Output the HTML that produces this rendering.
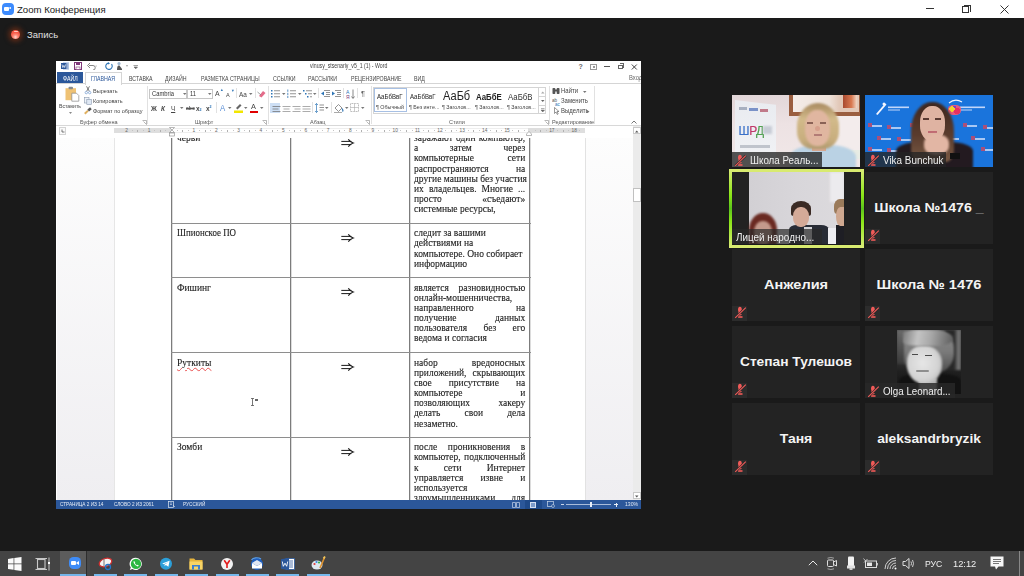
<!DOCTYPE html>
<html><head><meta charset="utf-8">
<style>
*{margin:0;padding:0;box-sizing:border-box}
html,body{width:1024px;height:576px;overflow:hidden;background:#1a1a1a;font-family:"Liberation Sans",sans-serif}
.a{position:absolute}
.t{position:absolute;white-space:nowrap;line-height:1}
/* title bar */
#tb{left:0;top:0;width:1024px;height:18px;background:#fff}
/* word */
#w{left:56px;top:61px;width:585px;height:448px;background:#fff;overflow:hidden}
.tab{position:absolute;top:14.5px;font-size:6.5px;color:#444;white-space:nowrap;line-height:1;transform:scaleX(0.81);transform-origin:0 0}
.rl{position:absolute;font-size:6px;color:#444;white-space:nowrap;line-height:1;transform:scaleX(0.92);transform-origin:0 0}
.doc{font-family:"Liberation Serif",serif;color:#1e1e1e;font-size:10px;line-height:1;-webkit-text-stroke:0.12px #1e1e1e}
.vl{position:absolute;width:1px;background:#6a6a6a}
.hl{position:absolute;height:1px;background:#6a6a6a}
/* tiles */
.tile{position:absolute;width:128px;height:72px;background:#232323;overflow:hidden}
.nm{position:absolute;left:0;right:0;top:29px;text-align:center;color:#f2f2f2;font-weight:bold;font-size:12.5px;line-height:1;white-space:nowrap}
.mic{position:absolute;left:0;top:57px;width:15px;height:15px;background:#2c2c2c}
.lbl{position:absolute;left:0;top:57px;height:15px;background:rgba(30,30,30,0.72);color:#eee;font-size:9.5px;line-height:15px;white-space:nowrap}
/* taskbar */
#task{left:0;top:551px;width:1024px;height:25px;background:#444}
.ul{position:absolute;top:23px;height:2px;width:23px;background:#76b9ed}
</style></head><body>

<!-- Title bar -->
<div id="tb" class="a">
  <div class="a" style="left:2px;top:3px;width:11.5px;height:12px;border-radius:4px;background:#3d8bfd"></div>
  <div class="a" style="left:4px;top:7px;width:4.5px;height:3.5px;background:#fff;border-radius:1px"></div>
  <div class="a" style="left:8px;top:7px;width:0;height:0;border-top:1.75px solid transparent;border-bottom:1.75px solid transparent;border-right:3px solid #fff"></div>
  <div class="t" style="left:17px;top:4.6px;font-size:9.6px;color:#222">Zoom Конференция</div>
  <div class="a" style="left:926px;top:8px;width:8px;height:1px;background:#333"></div>
  <div class="a" style="left:962px;top:6px;width:7px;height:7px;border:1px solid #333;background:#fff"></div>
  <div class="a" style="left:964px;top:4.5px;width:7px;height:7px;border-top:1px solid #333;border-right:1px solid #333"></div>
  <svg class="a" style="left:1000px;top:4.5px" width="9" height="9"><path d="M0.5 0.5L8.5 8.5M8.5 0.5L0.5 8.5" stroke="#333" stroke-width="1"/></svg>
</div>

<!-- Recording -->
<div class="a" style="left:11.4px;top:29.8px;width:8.8px;height:8.8px;border-radius:50%;background:radial-gradient(circle at 50% 78%,#ffd8d0 0,#ff8a78 28%,#f85a48 55%);box-shadow:0 0 5px 2.5px rgba(170,60,20,0.5)"></div>
<div class="a" style="left:14px;top:31.2px;width:3.8px;height:0.9px;background:#ffc8bc;border-radius:1px"></div>
<div class="t" style="left:27px;top:29.5px;font-size:9.5px;color:#e0e0e0">Запись</div>

<!-- WORD -->
<div id="w" class="a">

  <!-- title row -->
  <svg class="a" style="left:5px;top:1px" width="8" height="8"><rect x="2" y="0" width="6" height="8" fill="#c8d6ee"/><rect x="0" y="1" width="5.5" height="6" fill="#2b579a"/><path d="M1 2.5L1.8 5.5L2.75 3.5L3.7 5.5L4.5 2.5" stroke="#fff" stroke-width="0.7" fill="none"/><path d="M6 2H7.5M6 4H7.5M6 6H7.5" stroke="#2b579a" stroke-width="0.6"/></svg>
  <svg class="a" style="left:18px;top:1px" width="8" height="8"><rect x="0.5" y="0.5" width="7" height="7" fill="none" stroke="#80397b" stroke-width="1"/><rect x="2" y="0.5" width="4" height="2.5" fill="#80397b"/><rect x="2" y="5" width="4" height="2.5" fill="#fff" stroke="#80397b" stroke-width="0.6"/></svg>
  <svg class="a" style="left:31px;top:1px" width="10" height="8"><path d="M2 3.5H6A2.2 2.2 0 0 1 6 8" stroke="#777" stroke-width="0.9" fill="none"/><path d="M0.5 3.5L3 1M0.5 3.5L3 6" stroke="#777" stroke-width="0.9" fill="none"/><path d="M8.5 4H10" stroke="#999" stroke-width="0.6"/></svg>
  <svg class="a" style="left:49px;top:1px" width="8" height="8"><path d="M6.5 2.2A3.2 3.2 0 1 1 3.2 1.1" stroke="#2e75b6" stroke-width="1.1" fill="none"/><path d="M3 0L5 1.5L3 2.6Z" fill="#2e75b6"/></svg>
  <svg class="a" style="left:60px;top:0px" width="14" height="10"><circle cx="3" cy="2.5" r="1.6" fill="#9fb7d0"/><path d="M1 9C1 5 2 4 3.5 4.5L6 8V9Z" fill="#555"/><path d="M10 4.5L12 4.5L11 5.6Z" fill="#444"/></svg>
  <svg class="a" style="left:77px;top:3px" width="6" height="5"><path d="M0.5 1.5H5M1 3L2.75 4.8L4.5 3Z" stroke="#666" stroke-width="0.6" fill="#666"/></svg>
  <div class="t" style="left:253.5px;top:2.2px;font-size:6.5px;color:#444;transform:scaleX(0.80);transform-origin:0 0">vinusy_stsenariy_v5_1 (1) - Word</div>
  <div class="t" style="left:522.5px;top:2px;font-size:7px;color:#666;font-weight:bold">?</div>
  <div class="a" style="left:534px;top:2.5px;width:7px;height:6px;border:1px solid #999"></div>
  <div class="a" style="left:536.5px;top:4.5px;width:2px;height:2.5px;background:#999"></div>
  <div class="a" style="left:548px;top:5px;width:6px;height:1px;background:#555"></div>
  <div class="a" style="left:562px;top:3.5px;width:4.5px;height:4.5px;border:1px solid #666"></div>
  <div class="a" style="left:563.5px;top:2px;width:4.5px;height:4.5px;border-top:1px solid #666;border-right:1px solid #666"></div>
  <svg class="a" style="left:574.5px;top:2.5px" width="7" height="6"><path d="M0.8 0.5L5.8 5.5M5.8 0.5L0.8 5.5" stroke="#444" stroke-width="1"/></svg>

  <!-- tabs -->
  <div class="a" style="left:1px;top:11px;width:26px;height:11.5px;background:#2b579a"></div>
  <div class="tab" style="left:6.5px;color:#fff">ФАЙЛ</div>
  <div class="a" style="left:29px;top:11px;width:37px;height:13px;border:1px solid #d5d5d5;border-bottom:none;background:#fff"></div>
  <div class="a" style="left:0;top:22px;width:29px;height:1px;background:#d5d5d5"></div>
  <div class="a" style="left:66px;top:22px;width:519px;height:1px;background:#d5d5d5"></div>
  <div class="tab" style="left:35.2px;color:#2b579a">ГЛАВНАЯ</div>
  <div class="tab" style="left:72.6px">ВСТАВКА</div>
  <div class="tab" style="left:108.6px">ДИЗАЙН</div>
  <div class="tab" style="left:145px">РАЗМЕТКА СТРАНИЦЫ</div>
  <div class="tab" style="left:217px">ССЫЛКИ</div>
  <div class="tab" style="left:252px">РАССЫЛКИ</div>
  <div class="tab" style="left:295px">РЕЦЕНЗИРОВАНИЕ</div>
  <div class="tab" style="left:357.7px">ВИД</div>
  <div class="t" style="left:573px;top:13.5px;font-size:6.5px;color:#666;transform:scaleX(0.9);transform-origin:0 0">Вход</div>


  <!-- RIBBON: clipboard -->
  <svg class="a" style="left:8.5px;top:25px" width="15" height="16"><rect x="0.5" y="2.2" width="10.5" height="12" fill="#efc274"/><rect x="3.5" y="0.8" width="4.5" height="2.4" rx="1" fill="#8a8a8a"/><path d="M6.8 7.2H11.5L13.8 9.5V15.2H6.8Z" fill="#fff" stroke="#888" stroke-width="0.7"/></svg>
  <div class="rl" style="left:3px;top:41.8px;font-size:6.1px;color:#444;transform:scaleX(0.85)">Вставить</div>
  <svg class="a" style="left:13px;top:51px" width="3" height="2"><path d="M0 0H3L1.5 2Z" fill="#888"/></svg>
  <svg class="a" style="left:28px;top:25px" width="8" height="9"><path d="M2.5 0.3L5.3 5.2M5.5 0.3L2.7 5.2" stroke="#444" stroke-width="0.7"/><circle cx="2.3" cy="6.6" r="1.2" fill="none" stroke="#5a8ac6" stroke-width="0.6"/><circle cx="5.7" cy="6.6" r="1.2" fill="none" stroke="#5a8ac6" stroke-width="0.6"/></svg>
  <div class="rl" style="left:36.7px;top:26.5px;">Вырезать</div>
  <svg class="a" style="left:28px;top:36px" width="8" height="8"><rect x="0.5" y="0.5" width="4.5" height="5.5" fill="#eef2f8" stroke="#8a9ab0" stroke-width="0.6"/><rect x="2.8" y="2.3" width="4.5" height="5.2" fill="#dfe8f4" stroke="#8a9ab0" stroke-width="0.6"/></svg>
  <div class="rl" style="left:36.7px;top:36.9px;">Копировать</div>
  <svg class="a" style="left:28px;top:46px" width="8" height="8"><path d="M0.8 6.8L4 3.6" stroke="#e0b060" stroke-width="2"/><rect x="3.8" y="1.2" width="3.5" height="2.6" fill="#555" transform="rotate(-40 5.5 2.5)"/></svg>
  <div class="rl" style="left:36.7px;top:47.3px;">Формат по образцу</div>
  <div class="rl" style="left:24px;top:58.2px;color:#555">Буфер обмена</div>
  <svg class="a" style="left:85.5px;top:58.5px" width="5" height="5"><path d="M0.5 0.5H4.5V4.5M1.5 1.5L4.5 4.5" stroke="#888" stroke-width="0.6" fill="none"/></svg>
  <div class="a" style="left:90.5px;top:25px;width:1px;height:38px;background:#e1e1e1"></div>

  <!-- font group -->
  <div class="a" style="left:93.4px;top:27.6px;width:38px;height:10px;border:1px solid #c6c6c6"></div>
  <div class="rl" style="left:95.5px;top:29.6px;font-size:6.3px;color:#333">Cambria</div>
  <svg class="a" style="left:127px;top:31.5px" width="4" height="3"><path d="M0 0H3.5L1.75 2Z" fill="#777"/></svg>
  <div class="a" style="left:131.4px;top:27.6px;width:25.3px;height:10px;border:1px solid #c6c6c6"></div>
  <div class="rl" style="left:134px;top:29.6px;font-size:6.3px;color:#333">11</div>
  <svg class="a" style="left:152px;top:31.5px" width="4" height="3"><path d="M0 0H3.5L1.75 2Z" fill="#777"/></svg>
  <div class="rl" style="left:158.5px;top:29px;font-size:7.5px;color:#444">A</div><div class="rl" style="left:164px;top:27px;font-size:4px;color:#2e75b6">▲</div>
  <div class="rl" style="left:170px;top:30.5px;font-size:6px;color:#444">A</div><div class="rl" style="left:174.5px;top:27.5px;font-size:4px;color:#2e75b6">▼</div>
  <div class="a" style="left:180px;top:27px;width:1px;height:10px;background:#e1e1e1"></div>
  <div class="rl" style="left:183px;top:29.5px;font-size:7px;color:#444">Aa</div>
  <svg class="a" style="left:193px;top:31.5px" width="4" height="3"><path d="M0 0H3.5L1.75 2Z" fill="#777"/></svg>
  <div class="a" style="left:199px;top:27px;width:1px;height:10px;background:#e1e1e1"></div>
  <svg class="a" style="left:201px;top:28px" width="9" height="9"><path d="M2 7L6 2L8.5 4L4.5 8.5Z" fill="#e46c8a"/><path d="M0.5 3L4 6" stroke="#777" stroke-width="0.7"/></svg>
  <div class="rl" style="left:95px;top:43.5px;font-size:7px;font-weight:bold;color:#444">Ж</div>
  <div class="rl" style="left:105px;top:43.5px;font-size:7px;font-style:italic;font-weight:bold;color:#444">К</div>
  <div class="rl" style="left:115px;top:43.5px;font-size:7px;text-decoration:underline;color:#444">Ч</div>
  <svg class="a" style="left:124px;top:46px" width="4" height="3"><path d="M0 0H3.5L1.75 2Z" fill="#777"/></svg>
  <div class="rl" style="left:130px;top:44.5px;font-size:5.5px;font-weight:bold;color:#555;text-decoration:line-through">abc</div>
  <div class="rl" style="left:140px;top:44px;font-size:7px;font-weight:bold;color:#444">x<span style="font-size:4px;color:#2e75b6">2</span></div>
  <div class="rl" style="left:150px;top:44px;font-size:7px;font-weight:bold;color:#444">x<span style="font-size:4px;vertical-align:3px;color:#2e75b6">2</span></div>
  <div class="a" style="left:160px;top:41px;width:1px;height:11px;background:#e1e1e1"></div>
  <div class="rl" style="left:164px;top:43px;font-size:8.5px;color:#5b8fd6">A</div>
  <svg class="a" style="left:172px;top:46px" width="4" height="3"><path d="M0 0H3.5L1.75 2Z" fill="#777"/></svg>
  <svg class="a" style="left:178px;top:41px" width="10" height="11"><path d="M2 6L6 2L7.5 3.5L3.5 7.5Z" fill="#666"/><rect x="0" y="8.5" width="9" height="2.5" fill="#f2e600"/></svg>
  <svg class="a" style="left:188px;top:46px" width="4" height="3"><path d="M0 0H3.5L1.75 2Z" fill="#777"/></svg>
  <div class="rl" style="left:195px;top:42px;font-size:8px;color:#444">A</div>
  <div class="a" style="left:194px;top:50px;width:8px;height:2.3px;background:#e00000"></div>
  <svg class="a" style="left:204px;top:46px" width="4" height="3"><path d="M0 0H3.5L1.75 2Z" fill="#777"/></svg>
  <div class="rl" style="left:139px;top:58.2px;color:#555">Шрифт</div>
  <svg class="a" style="left:206px;top:58.5px" width="5" height="5"><path d="M0.5 0.5H4.5V4.5M1.5 1.5L4.5 4.5" stroke="#888" stroke-width="0.6" fill="none"/></svg>
  <div class="a" style="left:212px;top:25px;width:1px;height:38px;background:#e1e1e1"></div>

  <!-- paragraph group (rel x = abs-56) -->
  <svg class="a" style="left:215px;top:28px" width="9" height="9"><g fill="#2e75b6"><rect x="0" y="1" width="1.5" height="1.5"/><rect x="0" y="4" width="1.5" height="1.5"/><rect x="0" y="7" width="1.5" height="1.5"/></g><g stroke="#777" stroke-width="0.8"><path d="M3 1.75H9M3 4.75H9M3 7.75H9"/></g></svg>
  <svg class="a" style="left:226px;top:31.5px" width="4" height="3"><path d="M0 0H3.5L1.75 2Z" fill="#777"/></svg>
  <svg class="a" style="left:231px;top:28px" width="9" height="9"><g stroke="#2e75b6" stroke-width="0.8"><path d="M0.8 0.5V2.8M0.8 3.8V6M0.8 6.8V9"/></g><g stroke="#777" stroke-width="0.8"><path d="M3 1.75H9M3 4.75H9M3 7.75H9"/></g></svg>
  <svg class="a" style="left:242px;top:31.5px" width="4" height="3"><path d="M0 0H3.5L1.75 2Z" fill="#777"/></svg>
  <svg class="a" style="left:247px;top:28px" width="9" height="9"><g fill="#2e75b6"><rect x="0" y="1" width="1.5" height="1.5"/><rect x="2" y="4" width="1.5" height="1.5"/><rect x="4" y="7" width="1.5" height="1.5"/></g><g stroke="#777" stroke-width="0.8"><path d="M3 1.75H9M5 4.75H9M7 7.75H9"/></g></svg>
  <svg class="a" style="left:257px;top:31.5px" width="4" height="3"><path d="M0 0H3.5L1.75 2Z" fill="#777"/></svg>
  <div class="a" style="left:262px;top:27px;width:1px;height:10px;background:#e1e1e1"></div>
  <svg class="a" style="left:265px;top:28px" width="9" height="9"><path d="M3 1.5H9M5 3.5H9M5 5.5H9M3 7.5H9" stroke="#777" stroke-width="0.8"/><path d="M0 4.5L3 2.5V6.5Z" fill="#2e75b6"/></svg>
  <svg class="a" style="left:276px;top:28px" width="9" height="9"><path d="M3 1.5H9M5 3.5H9M5 5.5H9M3 7.5H9" stroke="#777" stroke-width="0.8"/><path d="M3 4.5L0 2.5V6.5Z" fill="#2e75b6"/></svg>
  <div class="a" style="left:287px;top:27px;width:1px;height:10px;background:#e1e1e1"></div>
  <svg class="a" style="left:290px;top:27.5px" width="9" height="10"><text x="0" y="4.5" font-size="5" fill="#2e75b6" font-family="Liberation Sans">A</text><text x="0" y="9.5" font-size="5" fill="#80397b" font-family="Liberation Sans">Я</text><path d="M7 0.5V9M5.5 7.5L7 9.5L8.5 7.5" stroke="#555" stroke-width="0.7" fill="none"/></svg>
  <div class="a" style="left:301px;top:27px;width:1px;height:10px;background:#e1e1e1"></div>
  <div class="rl" style="left:305px;top:28.5px;font-size:8px;color:#666">¶</div>
  <div class="a" style="left:214.3px;top:42px;width:10.2px;height:10px;background:#cddff5"></div>
  <svg class="a" style="left:215.5px;top:43.5px" width="9" height="8"><path d="M0.5 1.5H8.5M0.5 4H6.5M0.5 6.5H8.5" stroke="#6a6a6a" stroke-width="0.7"/></svg>
  <svg class="a" style="left:225.5px;top:43.5px" width="9" height="8"><path d="M0.5 1.5H8.5M1.5 4H7.5M0.5 6.5H8.5" stroke="#888" stroke-width="0.7"/></svg>
  <svg class="a" style="left:235.5px;top:43.5px" width="9" height="8"><path d="M0.5 1.5H8.5M2.5 4H8.5M0.5 6.5H8.5" stroke="#888" stroke-width="0.7"/></svg>
  <svg class="a" style="left:245.5px;top:43.5px" width="9" height="8"><path d="M0.5 1.5H8.5M0.5 4H8.5M0.5 6.5H8.5" stroke="#888" stroke-width="0.7"/></svg>
  <div class="a" style="left:256px;top:41px;width:1px;height:11px;background:#e1e1e1"></div>
  <svg class="a" style="left:259px;top:42px" width="9" height="10"><path d="M1.5 0.5V9.5M0 2L1.5 0.5L3 2M0 8L1.5 9.5L3 8" stroke="#2e75b6" stroke-width="0.7" fill="none"/><path d="M4.5 2H9M4.5 4.5H9M4.5 7H9" stroke="#777" stroke-width="0.8"/></svg>
  <svg class="a" style="left:269px;top:46px" width="4" height="3"><path d="M0 0H3.5L1.75 2Z" fill="#777"/></svg>
  <div class="a" style="left:275px;top:41px;width:1px;height:11px;background:#e1e1e1"></div>
  <svg class="a" style="left:278px;top:42px" width="10" height="10"><path d="M1 5L4.5 1.5L8 5L4.5 8.5Z" fill="#fff" stroke="#777" stroke-width="0.8"/><path d="M8 5.5Q9.5 7.5 8.5 8.5" stroke="#2e75b6" stroke-width="1.2" fill="none"/><rect x="0" y="9" width="8" height="1" fill="#aaa"/></svg>
  <svg class="a" style="left:289px;top:46px" width="4" height="3"><path d="M0 0H3.5L1.75 2Z" fill="#777"/></svg>
  <svg class="a" style="left:294px;top:42px" width="9" height="9"><rect x="0.5" y="0.5" width="8" height="8" fill="none" stroke="#999" stroke-width="0.7" stroke-dasharray="1 0.6"/><path d="M4.5 0.5V8.5M0.5 4.5H8.5" stroke="#aaa" stroke-width="0.6"/></svg>
  <svg class="a" style="left:305px;top:46px" width="4" height="3"><path d="M0 0H3.5L1.75 2Z" fill="#777"/></svg>
  <div class="rl" style="left:254px;top:58.2px;color:#555">Абзац</div>
  <svg class="a" style="left:309px;top:58.5px" width="5" height="5"><path d="M0.5 0.5H4.5V4.5M1.5 1.5L4.5 4.5" stroke="#888" stroke-width="0.6" fill="none"/></svg>
  <div class="a" style="left:315px;top:25px;width:1px;height:38px;background:#e1e1e1"></div>

  <!-- styles gallery -->
  <div class="a" style="left:317.4px;top:25.6px;width:172.5px;height:27px;border:1px solid #d4d4d4;background:#fff"></div>
  <div class="a" style="left:317.5px;top:27px;width:33px;height:24px;border:1px solid #a7c0e4"></div>
  <div class="rl" style="left:320.5px;top:33px;font-size:6.6px;color:#222">АаБбВвГ</div>
  <div class="rl" style="left:320px;top:44px;font-size:5.8px;color:#444">¶ Обычный</div>
  <div class="rl" style="left:354px;top:33px;font-size:6.6px;color:#222">АаБбВвГ</div>
  <div class="rl" style="left:353px;top:44px;font-size:5.8px;color:#444">¶ Без инте...</div>
  <div class="rl" style="left:387px;top:28.5px;font-size:12px;color:#222">АаБб</div>
  <div class="rl" style="left:386px;top:44px;font-size:5.8px;color:#444">¶ Заголов...</div>
  <div class="rl" style="left:419.7px;top:31.5px;font-size:8.5px;color:#222;font-weight:bold">АаБбЕ</div>
  <div class="rl" style="left:418.5px;top:44px;font-size:5.8px;color:#444">¶ Заголов...</div>
  <div class="rl" style="left:452px;top:31.5px;font-size:8.5px;color:#333">АаБбВ</div>
  <div class="rl" style="left:451px;top:44px;font-size:5.8px;color:#444">¶ Заголов...</div>
  <div class="a" style="left:482.4px;top:25.6px;width:7.5px;height:27px;border-left:1px solid #d4d4d4"></div>
  <div class="a" style="left:482.4px;top:35px;width:7.5px;height:1px;background:#d4d4d4"></div>
  <div class="a" style="left:482.4px;top:44px;width:7.5px;height:1px;background:#d4d4d4"></div>
  <svg class="a" style="left:484.5px;top:29.5px" width="4" height="3"><path d="M0 2.5H3.5L1.75 0.5Z" fill="#aaa"/></svg>
  <svg class="a" style="left:484.5px;top:38.5px" width="4" height="3"><path d="M0 0H3.5L1.75 2Z" fill="#666"/></svg>
  <svg class="a" style="left:484.5px;top:46.5px" width="4" height="5"><path d="M0 0.5H3.5M0 2H3.5L1.75 4Z" stroke="#666" stroke-width="0.5" fill="#666"/></svg>
  <div class="rl" style="left:393px;top:58.2px;color:#555">Стили</div>
  <svg class="a" style="left:487.5px;top:58.5px" width="5" height="5"><path d="M0.5 0.5H4.5V4.5M1.5 1.5L4.5 4.5" stroke="#888" stroke-width="0.6" fill="none"/></svg>
  <div class="a" style="left:493.4px;top:25px;width:1px;height:38px;background:#e1e1e1"></div>

  <!-- editing -->
  <svg class="a" style="left:496px;top:26px" width="8" height="8"><rect x="0.5" y="1" width="2.8" height="6" rx="0.8" fill="#555"/><rect x="4.7" y="1" width="2.8" height="6" rx="0.8" fill="#555"/><rect x="2.5" y="2.5" width="3" height="2" fill="#555"/></svg>
  <div class="rl" style="left:505px;top:26.8px;font-size:6.5px;color:#444">Найти</div>
  <svg class="a" style="left:526.5px;top:29.5px" width="4" height="3"><path d="M0 0H3.5L1.75 2Z" fill="#777"/></svg>
  <svg class="a" style="left:496px;top:36.5px" width="9" height="8"><text x="0" y="4" font-size="4.5" fill="#555" font-family="Liberation Sans">ab</text><text x="3" y="8" font-size="4.5" fill="#2e75b6" font-family="Liberation Sans">ac</text></svg>
  <div class="rl" style="left:505px;top:37px;font-size:6.5px;color:#444">Заменить</div>
  <svg class="a" style="left:498px;top:46px" width="6" height="8"><path d="M0.5 0.5V6.5L2 5L3.3 7.5L4.2 7L3 4.5H5Z" fill="#fff" stroke="#555" stroke-width="0.6"/></svg>
  <div class="rl" style="left:505px;top:47.2px;font-size:6.5px;color:#444">Выделить</div>
  <svg class="a" style="left:530px;top:49.5px" width="4" height="3"><path d="M0 0H3.5L1.75 2Z" fill="#777"/></svg>
  <div class="rl" style="left:496px;top:58.2px;color:#555">Редактирование</div>
  <div class="a" style="left:538px;top:25px;width:1px;height:38px;background:#e1e1e1"></div>
  <svg class="a" style="left:574.5px;top:59px" width="6" height="4"><path d="M0.5 3.5L3 1L5.5 3.5" stroke="#555" stroke-width="0.8" fill="none"/></svg>
<!--DOC-->
<div class="a" style="left:1px;top:75px;width:57px;height:364px;background:linear-gradient(#fdfdfd,#efeef1)"></div>
<div class="a" style="left:529.5px;top:75px;width:47.5px;height:364px;background:linear-gradient(#fdfdfd,#efeef1)"></div>
<div class="a" style="left:58px;top:75px;width:471.5px;height:364px;background:#fff;border-left:1px solid #e6e6e6;border-right:1px solid #e2e2e2"></div>
<div class="a" style="left:115px;top:76.3px;height:362.7px;width:2px;background:linear-gradient(90deg,#7c7c7c 50%,#dcdcdc 50%)"></div>
<div class="a" style="left:234px;top:76.3px;height:362.7px;width:2px;background:linear-gradient(90deg,#7c7c7c 50%,#dcdcdc 50%)"></div>
<div class="a" style="left:353px;top:76.3px;height:362.7px;width:2px;background:linear-gradient(90deg,#7c7c7c 50%,#dcdcdc 50%)"></div>
<div class="a" style="left:473px;top:76.3px;height:362.7px;width:2px;background:linear-gradient(90deg,#7c7c7c 50%,#dcdcdc 50%)"></div>
<div class="a" style="left:115px;top:162px;width:360px;height:1px;background:#8e8e8e"></div>
<div class="a" style="left:115px;top:216px;width:360px;height:1px;background:#8e8e8e"></div>
<div class="a" style="left:115px;top:291px;width:360px;height:1px;background:#8e8e8e"></div>
<div class="a" style="left:115px;top:376px;width:360px;height:1px;background:#8e8e8e"></div>
<div class="doc t" style="left:120.5px;top:72.1px;font-size:10px;transform:scaleX(0.95);transform-origin:0 0">черви</div>
<svg class="a" style="left:285px;top:77.6px" width="14" height="8"><path d="M0.3 2.4H10.3M0.3 5.6H10.3" stroke="#1a1a1a" stroke-width="1"/><path d="M7.3 0.3Q9.3 3 12.2 4Q9.3 5 7.3 7.7" stroke="#1a1a1a" stroke-width="1.1" fill="none"/></svg>
<div class="doc a" style="left:358.3px;top:72.1px;font-size:10px;width:117.1px;text-align:justify;text-align-last:justify;white-space:nowrap;transform:scaleX(0.95);transform-origin:0 0">заражают один компьютер,</div>
<div class="doc a" style="left:358.3px;top:82.2px;font-size:10px;width:117.1px;text-align:justify;text-align-last:justify;white-space:nowrap;transform:scaleX(0.95);transform-origin:0 0">а затем через</div>
<div class="doc a" style="left:358.3px;top:92.4px;font-size:10px;width:117.1px;text-align:justify;text-align-last:justify;white-space:nowrap;transform:scaleX(0.95);transform-origin:0 0">компьютерные сети</div>
<div class="doc a" style="left:358.3px;top:102.5px;font-size:10px;width:117.1px;text-align:justify;text-align-last:justify;white-space:nowrap;transform:scaleX(0.95);transform-origin:0 0">распространяются на</div>
<div class="doc a" style="left:358.3px;top:112.7px;font-size:10px;width:117.1px;text-align:justify;text-align-last:justify;white-space:nowrap;transform:scaleX(0.95);transform-origin:0 0">другие машины без участия</div>
<div class="doc a" style="left:358.3px;top:122.8px;font-size:10px;width:117.1px;text-align:justify;text-align-last:justify;white-space:nowrap;transform:scaleX(0.95);transform-origin:0 0">их владельцев. Многие ...</div>
<div class="doc a" style="left:358.3px;top:133.0px;font-size:10px;width:117.1px;text-align:justify;text-align-last:justify;white-space:nowrap;transform:scaleX(0.95);transform-origin:0 0">просто «съедают»</div>
<div class="doc t" style="left:358.3px;top:143.2px;font-size:10px;transform:scaleX(0.95);transform-origin:0 0">системные ресурсы,</div>
<div class="doc t" style="left:120.5px;top:167.3px;font-size:10px;transform:scaleX(0.95);transform-origin:0 0"><span style="display:inline-block;transform:scaleX(0.935);transform-origin:0 0">Шпионское ПО</span></div>
<svg class="a" style="left:285px;top:172.8px" width="14" height="8"><path d="M0.3 2.4H10.3M0.3 5.6H10.3" stroke="#1a1a1a" stroke-width="1"/><path d="M7.3 0.3Q9.3 3 12.2 4Q9.3 5 7.3 7.7" stroke="#1a1a1a" stroke-width="1.1" fill="none"/></svg>
<div class="doc t" style="left:358.3px;top:167.3px;font-size:10px;transform:scaleX(0.95);transform-origin:0 0">следит за вашими</div>
<div class="doc t" style="left:358.3px;top:177.4px;font-size:10px;transform:scaleX(0.95);transform-origin:0 0">действиями на</div>
<div class="doc t" style="left:358.3px;top:187.6px;font-size:10px;transform:scaleX(0.95);transform-origin:0 0">компьютере. Оно собирает</div>
<div class="doc t" style="left:358.3px;top:197.7px;font-size:10px;transform:scaleX(0.95);transform-origin:0 0">информацию</div>
<div class="doc t" style="left:120.5px;top:221.5px;font-size:10px;transform:scaleX(0.95);transform-origin:0 0">Фишинг</div>
<svg class="a" style="left:285px;top:227.0px" width="14" height="8"><path d="M0.3 2.4H10.3M0.3 5.6H10.3" stroke="#1a1a1a" stroke-width="1"/><path d="M7.3 0.3Q9.3 3 12.2 4Q9.3 5 7.3 7.7" stroke="#1a1a1a" stroke-width="1.1" fill="none"/></svg>
<div class="doc a" style="left:358.3px;top:221.5px;font-size:10px;width:117.1px;text-align:justify;text-align-last:justify;white-space:nowrap;transform:scaleX(0.95);transform-origin:0 0">является разновидностью</div>
<div class="doc t" style="left:358.3px;top:231.6px;font-size:10px;transform:scaleX(0.95);transform-origin:0 0">онлайн-мошенничества,</div>
<div class="doc a" style="left:358.3px;top:241.8px;font-size:10px;width:117.1px;text-align:justify;text-align-last:justify;white-space:nowrap;transform:scaleX(0.95);transform-origin:0 0">направленного на</div>
<div class="doc a" style="left:358.3px;top:251.9px;font-size:10px;width:117.1px;text-align:justify;text-align-last:justify;white-space:nowrap;transform:scaleX(0.95);transform-origin:0 0">получение данных</div>
<div class="doc a" style="left:358.3px;top:262.1px;font-size:10px;width:117.1px;text-align:justify;text-align-last:justify;white-space:nowrap;transform:scaleX(0.95);transform-origin:0 0">пользователя без его</div>
<div class="doc t" style="left:358.3px;top:272.2px;font-size:10px;transform:scaleX(0.95);transform-origin:0 0">ведома и согласия</div>
<div class="doc t" style="left:120.5px;top:296.6px;font-size:10px;transform:scaleX(0.95);transform-origin:0 0"><span style="text-decoration:underline wavy #e85050;text-decoration-thickness:0.5px;text-underline-offset:1px">Руткиты</span></div>
<svg class="a" style="left:285px;top:302.1px" width="14" height="8"><path d="M0.3 2.4H10.3M0.3 5.6H10.3" stroke="#1a1a1a" stroke-width="1"/><path d="M7.3 0.3Q9.3 3 12.2 4Q9.3 5 7.3 7.7" stroke="#1a1a1a" stroke-width="1.1" fill="none"/></svg>
<div class="doc a" style="left:358.3px;top:296.6px;font-size:10px;width:117.1px;text-align:justify;text-align-last:justify;white-space:nowrap;transform:scaleX(0.95);transform-origin:0 0">набор вредоносных</div>
<div class="doc a" style="left:358.3px;top:306.8px;font-size:10px;width:117.1px;text-align:justify;text-align-last:justify;white-space:nowrap;transform:scaleX(0.95);transform-origin:0 0">приложений, скрывающих</div>
<div class="doc a" style="left:358.3px;top:316.9px;font-size:10px;width:117.1px;text-align:justify;text-align-last:justify;white-space:nowrap;transform:scaleX(0.95);transform-origin:0 0">свое присутствие на</div>
<div class="doc a" style="left:358.3px;top:327.1px;font-size:10px;width:117.1px;text-align:justify;text-align-last:justify;white-space:nowrap;transform:scaleX(0.95);transform-origin:0 0">компьютере и</div>
<div class="doc a" style="left:358.3px;top:337.2px;font-size:10px;width:117.1px;text-align:justify;text-align-last:justify;white-space:nowrap;transform:scaleX(0.95);transform-origin:0 0">позволяющих хакеру</div>
<div class="doc a" style="left:358.3px;top:347.4px;font-size:10px;width:117.1px;text-align:justify;text-align-last:justify;white-space:nowrap;transform:scaleX(0.95);transform-origin:0 0">делать свои дела</div>
<div class="doc t" style="left:358.3px;top:357.5px;font-size:10px;transform:scaleX(0.95);transform-origin:0 0">незаметно.</div>
<div class="doc t" style="left:120.5px;top:381.2px;font-size:10px;transform:scaleX(0.95);transform-origin:0 0">Зомби</div>
<svg class="a" style="left:285px;top:386.7px" width="14" height="8"><path d="M0.3 2.4H10.3M0.3 5.6H10.3" stroke="#1a1a1a" stroke-width="1"/><path d="M7.3 0.3Q9.3 3 12.2 4Q9.3 5 7.3 7.7" stroke="#1a1a1a" stroke-width="1.1" fill="none"/></svg>
<div class="doc a" style="left:358.3px;top:381.2px;font-size:10px;width:117.1px;text-align:justify;text-align-last:justify;white-space:nowrap;transform:scaleX(0.95);transform-origin:0 0">после проникновения в</div>
<div class="doc a" style="left:358.3px;top:391.4px;font-size:10px;width:117.1px;text-align:justify;text-align-last:justify;white-space:nowrap;transform:scaleX(0.95);transform-origin:0 0">компьютер, подключенный</div>
<div class="doc a" style="left:358.3px;top:401.5px;font-size:10px;width:117.1px;text-align:justify;text-align-last:justify;white-space:nowrap;transform:scaleX(0.95);transform-origin:0 0">к сети Интернет</div>
<div class="doc a" style="left:358.3px;top:411.7px;font-size:10px;width:117.1px;text-align:justify;text-align-last:justify;white-space:nowrap;transform:scaleX(0.95);transform-origin:0 0">управляется извне и</div>
<div class="doc t" style="left:358.3px;top:421.8px;font-size:10px;transform:scaleX(0.95);transform-origin:0 0">используется</div>
<div class="doc a" style="left:358.3px;top:432.0px;font-size:10px;width:117.1px;text-align:justify;text-align-last:justify;white-space:nowrap;transform:scaleX(0.95);transform-origin:0 0">злоумышленниками для</div>
<svg class="a" style="left:194px;top:337px" width="9" height="8"><path d="M1 0.5H4M1 7.5H4M2.5 0.5V7.5" stroke="#555" stroke-width="0.8"/><rect x="5" y="1" width="3" height="2" fill="#666"/></svg>
<!--/DOC-->
<!--RULER-->
<div class="a" style="left:0;top:64px;width:577px;height:12.6px;background:#fff"></div>
<div class="a" style="left:3px;top:66px;width:7px;height:8px;border:1px solid #d4d4d4;background:#fafafa"></div>
<svg class="a" style="left:4.5px;top:68px" width="4" height="4"><path d="M1 0.5V3H3.5" stroke="#555" stroke-width="0.8" fill="none"/></svg>
<div class="a" style="left:58px;top:67px;width:57.5px;height:5px;background:#dedede"></div>
<div class="a" style="left:115.5px;top:67px;width:357px;height:5px;background:#fff;border-top:1px solid #eee;border-bottom:1px solid #eee"></div>
<div class="a" style="left:472.4px;top:67px;width:57px;height:5px;background:#dedede"></div>
<div class="t" style="left:69.3px;top:67.6px;font-size:4.8px;color:#666">2</div>
<div class="a" style="left:75.8px;top:69px;width:1px;height:1px;background:#c4c4c4"></div>
<div class="a" style="left:81.4px;top:68.5px;width:1px;height:2px;background:#b0b0b0"></div>
<div class="a" style="left:87.0px;top:69px;width:1px;height:1px;background:#c4c4c4"></div>
<div class="t" style="left:91.7px;top:67.6px;font-size:4.8px;color:#666">1</div>
<div class="a" style="left:98.2px;top:69px;width:1px;height:1px;background:#c4c4c4"></div>
<div class="a" style="left:103.8px;top:68.5px;width:1px;height:2px;background:#b0b0b0"></div>
<div class="a" style="left:109.4px;top:69px;width:1px;height:1px;background:#c4c4c4"></div>
<div class="a" style="left:120.6px;top:69px;width:1px;height:1px;background:#c4c4c4"></div>
<div class="a" style="left:126.2px;top:68.5px;width:1px;height:2px;background:#b0b0b0"></div>
<div class="a" style="left:131.8px;top:69px;width:1px;height:1px;background:#c4c4c4"></div>
<div class="t" style="left:136.5px;top:67.6px;font-size:4.8px;color:#666">1</div>
<div class="a" style="left:143.0px;top:69px;width:1px;height:1px;background:#c4c4c4"></div>
<div class="a" style="left:148.6px;top:68.5px;width:1px;height:2px;background:#b0b0b0"></div>
<div class="a" style="left:154.2px;top:69px;width:1px;height:1px;background:#c4c4c4"></div>
<div class="t" style="left:158.9px;top:67.6px;font-size:4.8px;color:#666">2</div>
<div class="a" style="left:165.4px;top:69px;width:1px;height:1px;background:#c4c4c4"></div>
<div class="a" style="left:170.9px;top:68.5px;width:1px;height:2px;background:#b0b0b0"></div>
<div class="a" style="left:176.5px;top:69px;width:1px;height:1px;background:#c4c4c4"></div>
<div class="t" style="left:181.2px;top:67.6px;font-size:4.8px;color:#666">3</div>
<div class="a" style="left:187.7px;top:69px;width:1px;height:1px;background:#c4c4c4"></div>
<div class="a" style="left:193.3px;top:68.5px;width:1px;height:2px;background:#b0b0b0"></div>
<div class="a" style="left:198.9px;top:69px;width:1px;height:1px;background:#c4c4c4"></div>
<div class="t" style="left:203.6px;top:67.6px;font-size:4.8px;color:#666">4</div>
<div class="a" style="left:210.1px;top:69px;width:1px;height:1px;background:#c4c4c4"></div>
<div class="a" style="left:215.7px;top:68.5px;width:1px;height:2px;background:#b0b0b0"></div>
<div class="a" style="left:221.3px;top:69px;width:1px;height:1px;background:#c4c4c4"></div>
<div class="t" style="left:226.0px;top:67.6px;font-size:4.8px;color:#666">5</div>
<div class="a" style="left:232.5px;top:69px;width:1px;height:1px;background:#c4c4c4"></div>
<div class="a" style="left:238.1px;top:68.5px;width:1px;height:2px;background:#b0b0b0"></div>
<div class="a" style="left:243.7px;top:69px;width:1px;height:1px;background:#c4c4c4"></div>
<div class="t" style="left:248.4px;top:67.6px;font-size:4.8px;color:#666">6</div>
<div class="a" style="left:254.9px;top:69px;width:1px;height:1px;background:#c4c4c4"></div>
<div class="a" style="left:260.5px;top:68.5px;width:1px;height:2px;background:#b0b0b0"></div>
<div class="a" style="left:266.1px;top:69px;width:1px;height:1px;background:#c4c4c4"></div>
<div class="t" style="left:270.8px;top:67.6px;font-size:4.8px;color:#666">7</div>
<div class="a" style="left:277.3px;top:69px;width:1px;height:1px;background:#c4c4c4"></div>
<div class="a" style="left:282.8px;top:68.5px;width:1px;height:2px;background:#b0b0b0"></div>
<div class="a" style="left:288.4px;top:69px;width:1px;height:1px;background:#c4c4c4"></div>
<div class="t" style="left:293.1px;top:67.6px;font-size:4.8px;color:#666">8</div>
<div class="a" style="left:299.6px;top:69px;width:1px;height:1px;background:#c4c4c4"></div>
<div class="a" style="left:305.2px;top:68.5px;width:1px;height:2px;background:#b0b0b0"></div>
<div class="a" style="left:310.8px;top:69px;width:1px;height:1px;background:#c4c4c4"></div>
<div class="t" style="left:315.5px;top:67.6px;font-size:4.8px;color:#666">9</div>
<div class="a" style="left:322.0px;top:69px;width:1px;height:1px;background:#c4c4c4"></div>
<div class="a" style="left:327.6px;top:68.5px;width:1px;height:2px;background:#b0b0b0"></div>
<div class="a" style="left:333.2px;top:69px;width:1px;height:1px;background:#c4c4c4"></div>
<div class="t" style="left:336.5px;top:67.6px;font-size:4.8px;color:#666">10</div>
<div class="a" style="left:344.4px;top:69px;width:1px;height:1px;background:#c4c4c4"></div>
<div class="a" style="left:350.0px;top:68.5px;width:1px;height:2px;background:#b0b0b0"></div>
<div class="a" style="left:355.6px;top:69px;width:1px;height:1px;background:#c4c4c4"></div>
<div class="t" style="left:358.9px;top:67.6px;font-size:4.8px;color:#666">11</div>
<div class="a" style="left:366.8px;top:69px;width:1px;height:1px;background:#c4c4c4"></div>
<div class="a" style="left:372.4px;top:68.5px;width:1px;height:2px;background:#b0b0b0"></div>
<div class="a" style="left:378.0px;top:69px;width:1px;height:1px;background:#c4c4c4"></div>
<div class="t" style="left:381.3px;top:67.6px;font-size:4.8px;color:#666">12</div>
<div class="a" style="left:389.2px;top:69px;width:1px;height:1px;background:#c4c4c4"></div>
<div class="a" style="left:394.8px;top:68.5px;width:1px;height:2px;background:#b0b0b0"></div>
<div class="a" style="left:400.3px;top:69px;width:1px;height:1px;background:#c4c4c4"></div>
<div class="t" style="left:403.6px;top:67.6px;font-size:4.8px;color:#666">13</div>
<div class="a" style="left:411.5px;top:69px;width:1px;height:1px;background:#c4c4c4"></div>
<div class="a" style="left:417.1px;top:68.5px;width:1px;height:2px;background:#b0b0b0"></div>
<div class="a" style="left:422.7px;top:69px;width:1px;height:1px;background:#c4c4c4"></div>
<div class="t" style="left:426.0px;top:67.6px;font-size:4.8px;color:#666">14</div>
<div class="a" style="left:433.9px;top:69px;width:1px;height:1px;background:#c4c4c4"></div>
<div class="a" style="left:439.5px;top:68.5px;width:1px;height:2px;background:#b0b0b0"></div>
<div class="a" style="left:445.1px;top:69px;width:1px;height:1px;background:#c4c4c4"></div>
<div class="t" style="left:448.4px;top:67.6px;font-size:4.8px;color:#666">15</div>
<div class="a" style="left:456.3px;top:69px;width:1px;height:1px;background:#c4c4c4"></div>
<div class="a" style="left:461.9px;top:68.5px;width:1px;height:2px;background:#b0b0b0"></div>
<div class="a" style="left:467.5px;top:69px;width:1px;height:1px;background:#c4c4c4"></div>
<div class="a" style="left:478.7px;top:69px;width:1px;height:1px;background:#c4c4c4"></div>
<div class="a" style="left:484.3px;top:68.5px;width:1px;height:2px;background:#b0b0b0"></div>
<div class="a" style="left:489.9px;top:69px;width:1px;height:1px;background:#c4c4c4"></div>
<div class="t" style="left:493.2px;top:67.6px;font-size:4.8px;color:#666">17</div>
<div class="a" style="left:501.1px;top:69px;width:1px;height:1px;background:#c4c4c4"></div>
<div class="a" style="left:506.6px;top:68.5px;width:1px;height:2px;background:#b0b0b0"></div>
<div class="a" style="left:512.2px;top:69px;width:1px;height:1px;background:#c4c4c4"></div>
<div class="t" style="left:515.5px;top:67.6px;font-size:4.8px;color:#666">18</div>
<div class="a" style="left:523.4px;top:69px;width:1px;height:1px;background:#c4c4c4"></div>
<svg class="a" style="left:112.5px;top:65.5px" width="6" height="10"><path d="M0.5 0.5H5.5L3 3L5.5 5.5H0.5L3 3Z" fill="#fff" stroke="#888" stroke-width="0.6"/><rect x="0.5" y="6" width="5" height="3" fill="#fff" stroke="#888" stroke-width="0.6"/></svg>
<svg class="a" style="left:469.5px;top:69.5px" width="6" height="5"><path d="M0.5 4.5H5.5V3L3 0.5L0.5 3Z" fill="#fff" stroke="#888" stroke-width="0.6"/></svg>
<div class="a" style="left:577px;top:64px;width:8px;height:375px;background:#ebebeb"></div>
<div class="a" style="left:577px;top:66px;width:7.5px;height:7px;background:#fff;border:1px solid #c8c8c8"></div>
<svg class="a" style="left:579px;top:68.5px" width="4" height="3"><path d="M0 2.5H3.5L1.75 0.5Z" fill="#555"/></svg>
<div class="a" style="left:577px;top:126.5px;width:7.5px;height:14px;background:#fff;border:1px solid #c0c0c0"></div>
<div class="a" style="left:577px;top:431px;width:7.5px;height:7px;background:#fff;border:1px solid #c8c8c8"></div>
<svg class="a" style="left:579px;top:433.5px" width="4" height="3"><path d="M0 0.5H3.5L1.75 2.5Z" fill="#555"/></svg>
<!--/RULER-->
  <div class="a" style="left:0;top:439px;width:585px;height:9px;background:#2b579a"></div>
  <div class="rl" style="left:4px;top:440.5px;font-size:5.6px;color:#e8eef7;transform:scaleX(0.84)">СТРАНИЦА 2 ИЗ 14</div>
  <div class="rl" style="left:58px;top:440.5px;font-size:5.6px;color:#e8eef7;transform:scaleX(0.84)">СЛОВО 2 ИЗ 2061</div>
  <svg class="a" style="left:111.5px;top:440px" width="8" height="7"><rect x="0.5" y="0.5" width="5" height="6" fill="none" stroke="#dfe7f3" stroke-width="0.7"/><path d="M2 2H4M2 3.5H4M5 4L7 6" stroke="#dfe7f3" stroke-width="0.6"/></svg>
  <div class="rl" style="left:127px;top:440.5px;font-size:5.6px;color:#e8eef7;transform:scaleX(0.84)">РУССКИЙ</div>
  <svg class="a" style="left:456px;top:440.5px" width="8" height="6"><path d="M0.5 0.5H3.5V5.5H0.5ZM4.5 0.5H7.5V5.5H4.5Z" fill="none" stroke="#c9d6ea" stroke-width="0.7"/></svg>
  <div class="a" style="left:469px;top:439px;width:17px;height:9px;background:#1f4a8a"></div>
  <div class="a" style="left:474px;top:440.5px;width:6px;height:6px;border:1px solid #d5dff0;background:#7d9ccb"></div>
  <svg class="a" style="left:491px;top:440px" width="8" height="7"><rect x="0.5" y="0.5" width="6" height="5" fill="none" stroke="#c9d6ea" stroke-width="0.7"/><circle cx="6" cy="5" r="1.5" fill="#2b579a" stroke="#c9d6ea" stroke-width="0.6"/></svg>
  <div class="a" style="left:505px;top:443px;width:3px;height:1px;background:#c9d6ea"></div>
  <div class="a" style="left:510px;top:443px;width:45px;height:1px;background:#a9bcda"></div>
  <div class="a" style="left:533.5px;top:440.5px;width:2px;height:5px;background:#e8eef7"></div>
  <div class="a" style="left:558px;top:443px;width:4px;height:1px;background:#e8eef7"></div>
  <div class="a" style="left:559.5px;top:441.5px;width:1px;height:4px;background:#e8eef7"></div>
  <div class="rl" style="left:568.5px;top:440.5px;font-size:5.6px;color:#dfe7f3">130%</div>

  <!-- ribbon bottom line -->
  <div class="a" style="left:0;top:63.5px;width:585px;height:1px;background:#d8d8d8"></div>
</div>

<!-- TILES -->
<!--TILES-->
<div class="tile" style="left:732px;top:95px"><div class="a" style="left:0px;top:0px;width:128px;height:72px;background:linear-gradient(180deg,#e2d6d8 0%,#ede2e3 40%,#f1e8e8 100%);"></div><div class="a" style="left:3px;top:5px;width:41px;height:60px;background:linear-gradient(180deg,#e9ebf0,#f1f2f5);clip-path:polygon(0 0,100% 8%,100% 100%,0 100%)"></div><div class="a" style="left:7px;top:12px;width:8px;height:3px;background:#a8b0c0;filter:blur(0.6px)"></div><div class="a" style="left:17px;top:13px;width:9px;height:2.5px;background:#7a92c8;filter:blur(0.6px)"></div><div class="a" style="left:28px;top:14px;width:8px;height:2.5px;background:#c07a8a;filter:blur(0.6px)"></div><div class="t" style="left:6.5px;top:29.5px;font-size:12px;letter-spacing:-0.3px;filter:blur(0.3px);-webkit-text-stroke:0.2px currentColor"><span style="color:#3a70c8">Ш</span><span style="color:#c03a6a">Р</span><span style="color:#50a050">Д</span></div><div class="a" style="left:31px;top:31px;width:9px;height:8px;background:#c8ccd6;filter:blur(0.8px)"></div><div class="a" style="left:8px;top:50px;width:30px;height:3px;background:#c0c4cc;filter:blur(0.6px)"></div><div class="a" style="left:57px;top:0px;width:71px;height:21px;background:#9a5e40;filter:blur(0.5px)"></div><div class="a" style="left:60.5px;top:0px;width:66px;height:16.5px;background:linear-gradient(90deg,#f4ece8,#eee2da 55%,#e2c8b8 70%);filter:blur(0.5px)"></div><div class="a" style="left:111px;top:0px;width:14px;height:13px;background:linear-gradient(90deg,#a84a30,#d87850 60%,#f0d8c8);filter:blur(0.6px)"></div><div class="a" style="left:100px;top:21px;width:28px;height:40px;background:#f3ecec;"></div><div class="a" style="left:115.5px;top:55px;width:12.5px;height:9px;background:#e8ece4;filter:blur(0.5px)"></div><div class="a" style="left:58px;top:50px;width:66px;height:30px;background:#bad2e4;border-radius:40% 40% 0 0;filter:blur(0.8px)"></div><div class="a" style="left:80px;top:44px;width:14px;height:12px;background:#d8a894;filter:blur(0.6px)"></div><div class="a" style="left:64.5px;top:8px;width:42px;height:46px;background:linear-gradient(180deg,#a88a60,#d2ba8a 35%,#c8ae7e 80%,#b09a70);border-radius:50% 50% 38% 38%;filter:blur(1px)"></div><div class="a" style="left:73px;top:15px;width:25px;height:36px;background:#e0b6a0;border-radius:46% 46% 44% 44%;filter:blur(0.8px)"></div><div class="a" style="left:75px;top:27px;width:6px;height:1.6px;background:#8a6256;filter:blur(0.3px)"></div><div class="a" style="left:88px;top:27px;width:6px;height:1.6px;background:#8a6256;filter:blur(0.3px)"></div><div class="a" style="left:82px;top:39px;width:8px;height:1.6px;background:#b27c76;filter:blur(0.3px)"></div><div class="a" style="left:83px;top:31px;width:5px;height:5px;background:#d6a08c;border-radius:50%;filter:blur(0.6px)"></div><div class="lbl" style="width:89.7px;background:rgba(36,36,36,0.78)"><svg class="a" style="left:0.5px;top:0.5px" width="15" height="15"><ellipse cx="6.9" cy="4.6" rx="1.9" ry="2.9" fill="#f05a58"/><path d="M6.2 7V10.8M5.8 9Q7 10.5 8.2 9" stroke="#f05a58" stroke-width="1.6" fill="none"/><rect x="5.1" y="11.2" width="4.4" height="1.6" fill="#f05a58"/><path d="M2.2 12.8L12.8 2.6" stroke="#2a2a2a" stroke-width="2.2"/><path d="M2.2 12.8L12.8 2.6" stroke="#f05a58" stroke-width="1.1"/></svg><span class="t" style="left:17.8px;top:3.5px;font-size:10px;color:#f0f0f0;transform:scaleX(0.98);transform-origin:0 0">Школа Реаль...</span></div></div>
<div class="tile" style="left:865px;top:95px"><div class="a" style="left:0px;top:0px;width:128px;height:72px;background:#1a74dc;"></div><svg class="a" style="left:0;top:0" width="128" height="72"><g fill="#f4f6ff"><path d="M11 19L20 8.5L21.5 9.5L12.5 20Z"/><circle cx="19" cy="9" r="1.5"/></g><g fill="#dfe8ff" opacity="0.85"><rect x="23" y="11.5" width="21" height="1.6"/><rect x="23" y="14.5" width="12" height="1"/><rect x="95" y="11.5" width="25" height="1.6"/><rect x="95" y="14.5" width="12" height="1"/></g><path d="M84 8Q90 3 97 7" stroke="#f4f6ff" stroke-width="1.2" fill="none"/></svg><div class="a" style="left:82.5px;top:10px;width:13px;height:10px;background:radial-gradient(circle at 30% 40%,#f0d030 0 25%,transparent 26%),radial-gradient(circle at 70% 60%,#e83060 0 30%,transparent 31%),radial-gradient(circle at 50% 30%,#8040c0 0 20%,transparent 21%),#e85a7a;border-radius:40%;filter:blur(0.5px)"></div><div class="a" style="left:3px;top:28px;width:4px;height:4px;background:#c24a6a;filter:blur(0.5px);opacity:0.85"></div><div class="a" style="left:7px;top:30px;width:10px;height:1.5px;background:#e6ecff;filter:blur(0.4px);opacity:0.7"></div><div class="a" style="left:22px;top:30px;width:4px;height:4px;background:#c24a6a;filter:blur(0.5px);opacity:0.85"></div><div class="a" style="left:26px;top:32px;width:10px;height:1.5px;background:#e6ecff;filter:blur(0.4px);opacity:0.7"></div><div class="a" style="left:12px;top:41px;width:4px;height:4px;background:#c24a6a;filter:blur(0.5px);opacity:0.85"></div><div class="a" style="left:16px;top:43px;width:10px;height:1.5px;background:#e6ecff;filter:blur(0.4px);opacity:0.7"></div><div class="a" style="left:32px;top:42px;width:4px;height:4px;background:#c24a6a;filter:blur(0.5px);opacity:0.85"></div><div class="a" style="left:36px;top:44px;width:10px;height:1.5px;background:#e6ecff;filter:blur(0.4px);opacity:0.7"></div><div class="a" style="left:3px;top:52px;width:4px;height:4px;background:#c24a6a;filter:blur(0.5px);opacity:0.85"></div><div class="a" style="left:7px;top:54px;width:10px;height:1.5px;background:#e6ecff;filter:blur(0.4px);opacity:0.7"></div><div class="a" style="left:22px;top:53px;width:4px;height:4px;background:#c24a6a;filter:blur(0.5px);opacity:0.85"></div><div class="a" style="left:26px;top:55px;width:10px;height:1.5px;background:#e6ecff;filter:blur(0.4px);opacity:0.7"></div><div class="a" style="left:98px;top:28px;width:4px;height:4px;background:#c24a6a;filter:blur(0.5px);opacity:0.85"></div><div class="a" style="left:102px;top:30px;width:10px;height:1.5px;background:#e6ecff;filter:blur(0.4px);opacity:0.7"></div><div class="a" style="left:118px;top:30px;width:4px;height:4px;background:#c24a6a;filter:blur(0.5px);opacity:0.85"></div><div class="a" style="left:122px;top:32px;width:10px;height:1.5px;background:#e6ecff;filter:blur(0.4px);opacity:0.7"></div><div class="a" style="left:106px;top:41px;width:4px;height:4px;background:#c24a6a;filter:blur(0.5px);opacity:0.85"></div><div class="a" style="left:110px;top:43px;width:10px;height:1.5px;background:#e6ecff;filter:blur(0.4px);opacity:0.7"></div><div class="a" style="left:116px;top:52px;width:4px;height:4px;background:#c24a6a;filter:blur(0.5px);opacity:0.85"></div><div class="a" style="left:120px;top:54px;width:10px;height:1.5px;background:#e6ecff;filter:blur(0.4px);opacity:0.7"></div><div class="a" style="left:45px;top:28px;width:4px;height:4px;background:#c24a6a;filter:blur(0.5px);opacity:0.85"></div><div class="a" style="left:49px;top:30px;width:10px;height:1.5px;background:#e6ecff;filter:blur(0.4px);opacity:0.7"></div><div class="a" style="left:80px;top:41px;width:4px;height:4px;background:#c24a6a;filter:blur(0.5px);opacity:0.85"></div><div class="a" style="left:84px;top:43px;width:10px;height:1.5px;background:#e6ecff;filter:blur(0.4px);opacity:0.7"></div><div class="a" style="left:31px;top:47px;width:77px;height:30px;background:#231a20;border-radius:30% 30% 0 0;filter:blur(0.8px)"></div><div class="a" style="left:45.5px;top:6.5px;width:43px;height:60px;background:linear-gradient(180deg,#3e261e,#5a3c2e 55%,#7a5a44);border-radius:48% 48% 20% 20%;filter:blur(0.9px)"></div><div class="a" style="left:54.8px;top:11px;width:25px;height:35px;background:#dfb3a2;border-radius:46% 46% 44% 44%;filter:blur(0.7px)"></div><div class="a" style="left:58px;top:23px;width:6px;height:1.6px;background:#5a3a32;filter:blur(0.3px)"></div><div class="a" style="left:70px;top:23px;width:6px;height:1.6px;background:#5a3a32;filter:blur(0.3px)"></div><div class="a" style="left:63px;top:36px;width:9px;height:2px;background:#c06a72;filter:blur(0.4px)"></div><div class="a" style="left:58.5px;top:39px;width:25px;height:21px;background:#e2b6a4;border-radius:45%;filter:blur(0.8px)"></div><div class="a" style="left:85px;top:58px;width:10px;height:6px;background:#111;filter:blur(0.6px)"></div><div class="lbl" style="width:81px;background:rgba(36,36,36,0.78)"><svg class="a" style="left:0.5px;top:0.5px" width="15" height="15"><ellipse cx="6.9" cy="4.6" rx="1.9" ry="2.9" fill="#f05a58"/><path d="M6.2 7V10.8M5.8 9Q7 10.5 8.2 9" stroke="#f05a58" stroke-width="1.6" fill="none"/><rect x="5.1" y="11.2" width="4.4" height="1.6" fill="#f05a58"/><path d="M2.2 12.8L12.8 2.6" stroke="#2a2a2a" stroke-width="2.2"/><path d="M2.2 12.8L12.8 2.6" stroke="#f05a58" stroke-width="1.1"/></svg><span class="t" style="left:17.8px;top:3.5px;font-size:10px;color:#f0f0f0;transform:scaleX(0.99);transform-origin:0 0">Vika Bunchuk</span></div></div>
<div class="a" style="left:729px;top:169px;width:134.5px;height:78.5px;border:3px solid #d6e86a;border-color:#d8ea70 transparent #d8ea70 transparent"></div>
<div class="a" style="left:729px;top:169px;width:3px;height:78.5px;background:linear-gradient(180deg,#dcec78,#8ce618 33%,#5cc41c 50%,#8ce618 67%,#dcec78)"></div>
<div class="a" style="left:860.5px;top:169px;width:3px;height:78.5px;background:linear-gradient(180deg,#dcec78,#8ce618 33%,#5cc41c 50%,#8ce618 67%,#dcec78)"></div>
<div class="tile" style="left:732px;top:172px"><div class="a" style="left:0px;top:0px;width:128px;height:72px;background:#222;"></div><div class="a" style="left:16.5px;top:0px;width:95.5px;height:72px;background:linear-gradient(90deg,#d2d0d4,#d8d6da 50%,#dcdadd);"></div><div class="a" style="left:98px;top:0px;width:14px;height:30px;background:#ecebee;filter:blur(1px)"></div><div class="a" style="left:17px;top:41px;width:28px;height:34px;background:#6a2a22;border-radius:50% 50% 10% 10%;filter:blur(1px)"></div><div class="a" style="left:21.8px;top:49px;width:18.5px;height:24px;background:#c49a8c;border-radius:45%;filter:blur(0.8px)"></div><div class="a" style="left:57px;top:53px;width:40px;height:22px;background:#282c36;border-radius:20% 20% 0 0;filter:blur(0.6px)"></div><div class="a" style="left:72px;top:55px;width:8px;height:17px;background:#d4d4d8;filter:blur(0.6px)"></div><div class="a" style="left:59px;top:29px;width:20px;height:15px;background:#3a2a24;border-radius:50% 50% 15% 15%;filter:blur(0.7px)"></div><div class="a" style="left:61.3px;top:35px;width:16px;height:20px;background:#d4aa98;border-radius:45%;filter:blur(0.7px)"></div><div class="a" style="left:96px;top:56px;width:8px;height:16px;background:#eeeef2;filter:blur(0.5px)"></div><div class="a" style="left:104px;top:53px;width:8px;height:19px;background:#1e1e24;"></div><div class="a" style="left:101.5px;top:27px;width:12px;height:15px;background:#9a7a5a;border-radius:50% 0 0 30%;filter:blur(0.7px)"></div><div class="a" style="left:103.5px;top:35px;width:8.5px;height:19px;background:#cfa890;border-radius:50% 0 0 50%;filter:blur(0.6px)"></div><div class="a" style="left:112px;top:0px;width:16px;height:72px;background:#222;"></div><div class="lbl" style="width:89.7px;background:rgba(40,40,40,0.7)"><span class="t" style="left:4px;top:3.5px;font-size:10px;color:#f0f0f0;transform:scaleX(0.99);transform-origin:0 0">Лицей народно...</span></div></div>
<div class="tile" style="left:865px;top:172px"><div class="t" style="left:64px;top:28.7px;font-size:13.5px;font-weight:bold;color:#f4f4f4;transform:translateX(-50%) scaleX(1.05)">Школа №1476 <span style='color:#999'>_</span></div><div class="mic"><svg class="a" style="left:0.5px;top:-1px" width="15" height="15"><ellipse cx="6.9" cy="4.6" rx="1.9" ry="2.9" fill="#f05a58"/><path d="M6.2 7V10.8M5.8 9Q7 10.5 8.2 9" stroke="#f05a58" stroke-width="1.6" fill="none"/><rect x="5.1" y="11.2" width="4.4" height="1.6" fill="#f05a58"/><path d="M2.2 12.8L12.8 2.6" stroke="#2a2a2a" stroke-width="2.2"/><path d="M2.2 12.8L12.8 2.6" stroke="#f05a58" stroke-width="1.1"/></svg></div></div>
<div class="tile" style="left:732px;top:249px"><div class="t" style="left:64px;top:28.7px;font-size:13.5px;font-weight:bold;color:#f4f4f4;transform:translateX(-50%) scaleX(1.078)">Анжелия</div><div class="mic"><svg class="a" style="left:0.5px;top:-1px" width="15" height="15"><ellipse cx="6.9" cy="4.6" rx="1.9" ry="2.9" fill="#f05a58"/><path d="M6.2 7V10.8M5.8 9Q7 10.5 8.2 9" stroke="#f05a58" stroke-width="1.6" fill="none"/><rect x="5.1" y="11.2" width="4.4" height="1.6" fill="#f05a58"/><path d="M2.2 12.8L12.8 2.6" stroke="#2a2a2a" stroke-width="2.2"/><path d="M2.2 12.8L12.8 2.6" stroke="#f05a58" stroke-width="1.1"/></svg></div></div>
<div class="tile" style="left:865px;top:249px"><div class="t" style="left:64px;top:28.7px;font-size:13.5px;font-weight:bold;color:#f4f4f4;transform:translateX(-50%) scaleX(1.084)">Школа № 1476</div><div class="mic"><svg class="a" style="left:0.5px;top:-1px" width="15" height="15"><ellipse cx="6.9" cy="4.6" rx="1.9" ry="2.9" fill="#f05a58"/><path d="M6.2 7V10.8M5.8 9Q7 10.5 8.2 9" stroke="#f05a58" stroke-width="1.6" fill="none"/><rect x="5.1" y="11.2" width="4.4" height="1.6" fill="#f05a58"/><path d="M2.2 12.8L12.8 2.6" stroke="#2a2a2a" stroke-width="2.2"/><path d="M2.2 12.8L12.8 2.6" stroke="#f05a58" stroke-width="1.1"/></svg></div></div>
<div class="tile" style="left:732px;top:326px"><div class="t" style="left:64px;top:28.7px;font-size:13.5px;font-weight:bold;color:#f4f4f4;transform:translateX(-50%) scaleX(1.017)">Степан Тулешов</div><div class="mic"><svg class="a" style="left:0.5px;top:-1px" width="15" height="15"><ellipse cx="6.9" cy="4.6" rx="1.9" ry="2.9" fill="#f05a58"/><path d="M6.2 7V10.8M5.8 9Q7 10.5 8.2 9" stroke="#f05a58" stroke-width="1.6" fill="none"/><rect x="5.1" y="11.2" width="4.4" height="1.6" fill="#f05a58"/><path d="M2.2 12.8L12.8 2.6" stroke="#2a2a2a" stroke-width="2.2"/><path d="M2.2 12.8L12.8 2.6" stroke="#f05a58" stroke-width="1.1"/></svg></div></div>
<div class="tile" style="left:865px;top:326px"><div class="a" style="left:32px;top:3.6px;width:64px;height:64px;overflow:hidden;background:linear-gradient(180deg,#4a4a4a 0%,#383838 40%,#202020 65%,#161616 100%)"><div class="a" style="left:48px;top:0px;width:16px;height:40px;background:linear-gradient(90deg,#2a2a2a,#262626 55%,#7a7a7a 85%,#5a5a5a);filter:blur(0.8px)"></div><div class="a" style="left:0px;top:0px;width:10px;height:34px;background:linear-gradient(180deg,#6a6a6a,#3a3a3a);filter:blur(1px)"></div><div class="a" style="left:2px;top:44px;width:62px;height:24px;background:#121212;border-radius:30% 30% 0 0;filter:blur(1px)"></div><div class="a" style="left:22px;top:48px;width:18px;height:14px;background:#b4b4b4;filter:blur(1px)"></div><div class="a" style="left:7px;top:0px;width:50px;height:44px;background:linear-gradient(180deg,#8a8a8a,#7a7a7a 50%,#4a4a4a);border-radius:30% 40% 45% 35%;filter:blur(1px)"></div><div class="a" style="left:10px;top:16px;width:35px;height:38px;background:radial-gradient(ellipse at 45% 45%,#e6e6e6 0%,#d4d4d4 55%,#a0a0a0 100%);border-radius:40% 45% 50% 50%;filter:blur(0.8px)"></div><div class="a" style="left:6px;top:0px;width:50px;height:16px;background:linear-gradient(100deg,#7a7a7a,#c4c4c4 30%,#a8a8a8 55%,#5a5a5a);border-radius:20% 50% 40% 30%;filter:blur(0.8px)"></div><div class="a" style="left:15px;top:24px;width:6px;height:1.8px;background:#4a4a4a;filter:blur(0.4px)"></div><div class="a" style="left:28px;top:25px;width:7px;height:1.8px;background:#4a4a4a;filter:blur(0.4px)"></div><div class="a" style="left:19px;top:40px;width:13px;height:2.5px;background:#8e8e8e;border-radius:2px;filter:blur(0.5px)"></div></div><div class="lbl" style="width:89.7px;background:rgba(40,40,40,0.82)"><svg class="a" style="left:0.5px;top:0.5px" width="15" height="15"><ellipse cx="6.9" cy="4.6" rx="1.9" ry="2.9" fill="#f05a58"/><path d="M6.2 7V10.8M5.8 9Q7 10.5 8.2 9" stroke="#f05a58" stroke-width="1.6" fill="none"/><rect x="5.1" y="11.2" width="4.4" height="1.6" fill="#f05a58"/><path d="M2.2 12.8L12.8 2.6" stroke="#2a2a2a" stroke-width="2.2"/><path d="M2.2 12.8L12.8 2.6" stroke="#f05a58" stroke-width="1.1"/></svg><span class="t" style="left:17.8px;top:3.5px;font-size:10px;color:#f0f0f0;transform:scaleX(0.98);transform-origin:0 0">Olga Leonard...</span></div></div>
<div class="tile" style="left:732px;top:403px"><div class="t" style="left:64px;top:28.7px;font-size:13.5px;font-weight:bold;color:#f4f4f4;transform:translateX(-50%) scaleX(1.035)">Таня</div><div class="mic"><svg class="a" style="left:0.5px;top:-1px" width="15" height="15"><ellipse cx="6.9" cy="4.6" rx="1.9" ry="2.9" fill="#f05a58"/><path d="M6.2 7V10.8M5.8 9Q7 10.5 8.2 9" stroke="#f05a58" stroke-width="1.6" fill="none"/><rect x="5.1" y="11.2" width="4.4" height="1.6" fill="#f05a58"/><path d="M2.2 12.8L12.8 2.6" stroke="#2a2a2a" stroke-width="2.2"/><path d="M2.2 12.8L12.8 2.6" stroke="#f05a58" stroke-width="1.1"/></svg></div></div>
<div class="tile" style="left:865px;top:403px"><div class="t" style="left:64px;top:28.7px;font-size:13.5px;font-weight:bold;color:#f4f4f4;transform:translateX(-50%) scaleX(1.016)">aleksandrbryzik</div><div class="mic"><svg class="a" style="left:0.5px;top:-1px" width="15" height="15"><ellipse cx="6.9" cy="4.6" rx="1.9" ry="2.9" fill="#f05a58"/><path d="M6.2 7V10.8M5.8 9Q7 10.5 8.2 9" stroke="#f05a58" stroke-width="1.6" fill="none"/><rect x="5.1" y="11.2" width="4.4" height="1.6" fill="#f05a58"/><path d="M2.2 12.8L12.8 2.6" stroke="#2a2a2a" stroke-width="2.2"/><path d="M2.2 12.8L12.8 2.6" stroke="#f05a58" stroke-width="1.1"/></svg></div></div>
<!--/TILES-->

<!-- TASKBAR -->
<div id="task" class="a">

  <svg class="a" style="left:8px;top:6px" width="14" height="14"><path d="M0 1.9L5.6 1.1V6.6H0ZM6.3 1L13.5 0V6.6H6.3ZM0 7.3H5.6V12.8L0 12ZM6.3 7.3H13.5V13.9L6.3 12.9Z" fill="#fafafa"/></svg>
  <svg class="a" style="left:35px;top:6px" width="16" height="14"><rect x="2.5" y="2.5" width="7.5" height="9" fill="none" stroke="#c8c8c8" stroke-width="1.1"/><path d="M0.5 1.5H12M0.5 12.5H12" stroke="#c8c8c8" stroke-width="1"/><path d="M14 0.5V13.5" stroke="#c8c8c8" stroke-width="1"/><rect x="13" y="5" width="2" height="2" fill="#fff"/></svg>
  <div class="a" style="left:60px;top:0;width:26px;height:25px;background:#5c5c5c"></div>
  <div class="a" style="left:86px;top:0;width:1px;height:25px;background:#2e2e2e"></div>
  <div class="a" style="left:87px;top:0;width:3px;height:25px;background:#484848"></div>
  <div class="a" style="left:68.5px;top:5.8px;width:12.5px;height:12.5px;border-radius:4.5px;background:#3f8cf7"></div>
  <div class="a" style="left:71px;top:10.2px;width:5px;height:4px;background:#fff;border-radius:1px"></div>
  <div class="a" style="left:76px;top:10.2px;width:0;height:0;border-top:2px solid transparent;border-bottom:2px solid transparent;border-right:3px solid #fff"></div>
  <div class="ul" style="left:60px;width:26px;background:#75b4e8"></div>
  <!-- app2 red disc -->
  <svg class="a" style="left:98px;top:5px" width="16" height="16"><ellipse cx="7.5" cy="6.5" rx="6.5" ry="4" fill="#f4f4f4" stroke="#d03030" stroke-width="1.3" transform="rotate(-20 7.5 6.5)"/><path d="M6 3V10" stroke="#777" stroke-width="1"/><circle cx="10" cy="11" r="2.5" fill="none" stroke="#2277cc" stroke-width="1.3"/></svg>
  <div class="ul" style="left:94px"></div>
  <!-- whatsapp -->
  <svg class="a" style="left:129px;top:5.5px" width="14" height="14"><path d="M7 0.8A6.1 6.1 0 1 1 3.4 12L0.8 13L1.8 10.5A6.1 6.1 0 0 1 7 0.8Z" fill="#fff"/><circle cx="7" cy="6.9" r="5.2" fill="#2cb742"/><path d="M4.6 4.2C4.2 5.5 5.8 8.6 8.9 9.5L9.8 8.6L8.5 7.7L7.9 8.2C7 7.8 6.2 7 5.8 6.1L6.3 5.5L5.4 4.2Z" fill="#fff"/></svg>
  <div class="ul" style="left:124px"></div>
  <!-- telegram -->
  <svg class="a" style="left:159px;top:6px" width="14" height="14"><circle cx="7" cy="6.7" r="6" fill="#2c9fd9"/><path d="M3.2 6.6L10.6 3.8L9.4 9.8L6.8 8L5.6 9.3V7.6L9.4 4.9L4.9 7.3Z" fill="#fff"/></svg>
  <div class="ul" style="left:155px"></div>
  <!-- folder -->
  <svg class="a" style="left:189px;top:6px" width="14" height="14"><path d="M0.5 1.5H5L6.5 3H13.5V12.5H0.5Z" fill="#e6b43c"/><rect x="0.5" y="4.5" width="13" height="8" fill="#f8d466"/><rect x="3" y="8" width="8" height="4.5" fill="#3d7fd1"/><rect x="5" y="9.5" width="4" height="3" fill="#f8d466"/></svg>
  <div class="ul" style="left:185px"></div>
  <!-- yandex -->
  <svg class="a" style="left:220px;top:5.5px" width="14" height="14"><circle cx="7" cy="7" r="6" fill="#f2f2f2"/><path d="M4.2 3.3L7 7.3L9.8 3.3M7 7.3V11" stroke="#e21b1b" stroke-width="1.6" fill="none"/></svg>
  <div class="ul" style="left:215.5px"></div>
  <!-- thunderbird -->
  <svg class="a" style="left:250px;top:5.5px" width="14" height="14"><circle cx="7" cy="7" r="6" fill="#1f5fbf"/><path d="M2 6L7 9L12 6V11.5H2Z" fill="#fff"/><path d="M2 6L7 3L12 6L7 9Z" fill="#dfe6f2"/><path d="M1.5 3C3 0.5 8 0 11 2" stroke="#5aa0ee" stroke-width="1.2" fill="none"/></svg>
  <div class="ul" style="left:246px"></div>
  <!-- word -->
  <svg class="a" style="left:281px;top:5.5px" width="14" height="14"><rect x="5" y="1.5" width="8.5" height="11" fill="#fff" stroke="#2b579a" stroke-width="0.8"/><path d="M7 4H12M7 6H12M7 8H12M7 10H12" stroke="#2b579a" stroke-width="0.8"/><path d="M0 2.2L8 0.8V13.2L0 11.8Z" fill="#2b579a"/><path d="M1.3 4.5L2.3 9.3L4 6.2L5.7 9.3L6.7 4.5" stroke="#fff" stroke-width="0.9" fill="none"/></svg>
  <div class="ul" style="left:276px"></div>
  <!-- paint -->
  <svg class="a" style="left:311px;top:5px" width="15" height="15"><ellipse cx="6" cy="9" rx="5.5" ry="4.5" fill="#dfe7ef"/><circle cx="3.5" cy="8" r="1.1" fill="#e23b3b"/><circle cx="5.5" cy="6" r="1.1" fill="#3b8be2"/><circle cx="8" cy="6.5" r="1.1" fill="#3bb24a"/><path d="M9 12L13.5 1.5" stroke="#e0922b" stroke-width="1.6"/><path d="M12.5 2.5L14 0.5" stroke="#f2c45a" stroke-width="1.8"/></svg>
  <div class="ul" style="left:307px"></div>

  <!-- tray -->
  <svg class="a" style="left:808px;top:9px" width="10" height="6"><path d="M0.8 5.2L5 1L9.2 5.2" stroke="#e6e6e6" stroke-width="1" fill="none"/></svg>
  <svg class="a" style="left:826px;top:6px" width="12" height="14"><rect x="1.5" y="3" width="6" height="6.5" rx="1" fill="none" stroke="#dcdcdc" stroke-width="1"/><path d="M7.5 5L10.5 3.5V9L7.5 7.5" stroke="#dcdcdc" stroke-width="1" fill="none"/><path d="M1.5 1.2Q5 -0.2 8 1.2M1.5 11.8Q5 13.2 8 11.8" stroke="#bbb" stroke-width="0.8" fill="none"/></svg>
  <svg class="a" style="left:846px;top:5px" width="10" height="15"><rect x="2" y="0.5" width="6" height="10" rx="1" fill="#f2f2f2"/><rect x="1" y="9.5" width="8" height="3" fill="#e0e0e0"/><rect x="3.5" y="12" width="3" height="2" fill="#ccc"/></svg>
  <svg class="a" style="left:863px;top:7px" width="15" height="11"><rect x="2.5" y="3" width="11" height="6.5" fill="none" stroke="#dcdcdc" stroke-width="1"/><rect x="13.5" y="5" width="1.3" height="2.5" fill="#dcdcdc"/><rect x="4" y="4.5" width="5" height="3.5" fill="#e8e8e8"/><path d="M0.5 0.5L3 3.5M1 4.5L4.5 1" stroke="#dcdcdc" stroke-width="0.8"/></svg>
  <svg class="a" style="left:884px;top:5.5px" width="13" height="13"><path d="M1 12A11 11 0 0 1 12 1M3.5 12A8.5 8.5 0 0 1 12 3.5M6 12A6 6 0 0 1 12 6M8.5 12A3.5 3.5 0 0 1 12 8.5" stroke="#d0d0d0" stroke-width="1" fill="none"/><circle cx="11.5" cy="11.5" r="1" fill="#fff"/></svg>
  <svg class="a" style="left:902px;top:6px" width="13" height="13"><path d="M1 4.5H3.5L7 1.5V11.5L3.5 8.5H1Z" fill="none" stroke="#dcdcdc" stroke-width="1"/><path d="M9 4.5Q10 6.5 9 8.5M10.5 3Q12.5 6.5 10.5 10" stroke="#dcdcdc" stroke-width="0.9" fill="none"/></svg>
  <div class="t" style="left:924.7px;top:8px;font-size:9.6px;color:#efefef;transform:scaleX(0.9);transform-origin:0 0">РУС</div>
  <div class="t" style="left:952.7px;top:8px;font-size:9.6px;color:#efefef;transform:scaleX(0.97);transform-origin:0 0">12:12</div>
  <svg class="a" style="left:990px;top:5px" width="14" height="16"><path d="M0.5 0.5H13.5V10.5H8.5L6 13.5L5 10.5H0.5Z" fill="#f6f6f6"/><path d="M3 3.5H11M3 5.5H11M3 7.5H9" stroke="#555" stroke-width="0.8"/></svg>
  <div class="a" style="left:1019px;top:0;width:1px;height:25px;background:#888"></div>

</div>

</body></html>
